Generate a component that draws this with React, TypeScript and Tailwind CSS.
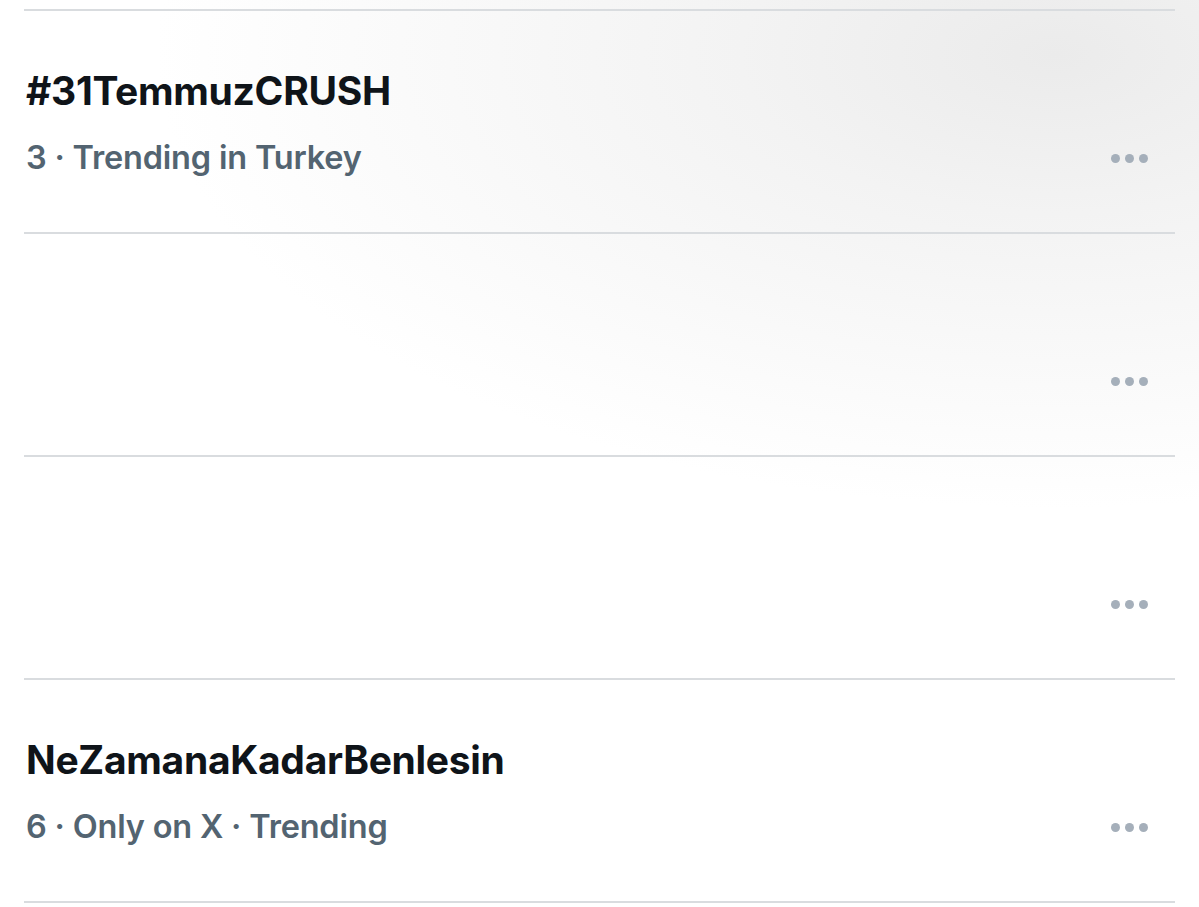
import React from "react";

type Trend = { title?: string; meta?: string };

const trends: Trend[] = [
  { title: "#31TemmuzCRUSH", meta: "3 · Trending in Turkey" },
  {},
  {},
  { title: "NeZamanaKadarBenlesin", meta: "6 · Only on X · Trending" },
];

function MoreDots() {
  return (
    <div className="flex items-center gap-[5px] pr-[27px]">
      <span className="block w-[9px] h-[9px] rounded-full bg-[#a5afba]" />
      <span className="block w-[9px] h-[9px] rounded-full bg-[#a5afba]" />
      <span className="block w-[9px] h-[9px] rounded-full bg-[#a5afba]" />
    </div>
  );
}

function TrendRow({ trend }: { trend: Trend }) {
  return (
    <div className="h-[223px] border-b-2 border-[#d9dcdf] flex flex-col pl-[2px]">
      <div className="h-[104px] pt-[56px] leading-[48px] text-[39px] font-bold text-[#0f1419] tracking-[-0.3px]">
        {trend.title ?? ""}
      </div>
      <div className="mt-[19px] h-[48px] flex items-center justify-between">
        <span className="text-[32.5px] font-semibold text-[#536471] leading-[48px] tracking-[-0.2px]">
          {trend.meta ?? ""}
        </span>
        <MoreDots />
      </div>
    </div>
  );
}

export default function App() {
  return (
    <div
      className="w-[1199px] h-[907px] overflow-hidden bg-[radial-gradient(ellipse_75%_50%_at_88%_6%,#ebebeb_0%,#f3f3f3_35%,#ffffff_100%)]"
      style={{ fontFamily: 'Inter, "Noto Sans", sans-serif' }}
    >
      <div className="mx-[24px] mt-[9px] border-t-2 border-[#d9dcdf]">
        {trends.map((t, i) => (
          <TrendRow key={i} trend={t} />
        ))}
      </div>
    </div>
  );
}
